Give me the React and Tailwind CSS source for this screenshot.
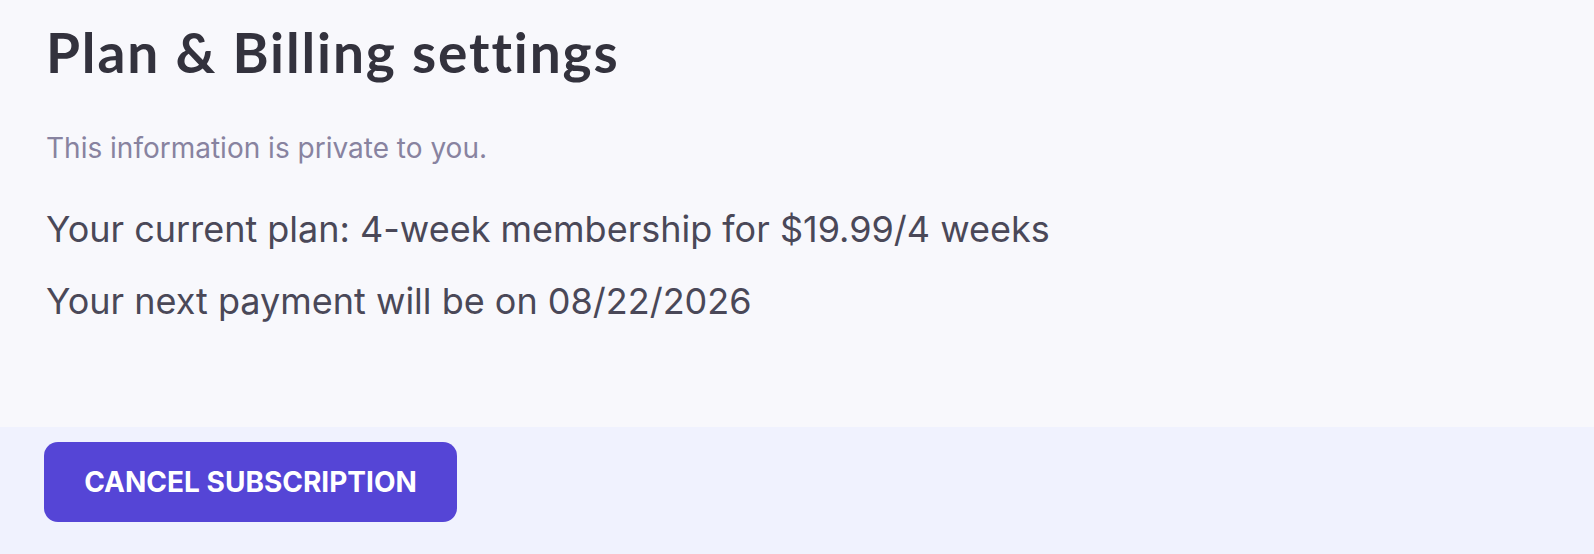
import React from 'react';

const App = () => {
  return (
    <div className="w-full h-[554px] flex flex-col bg-[#f8f8fc]" style={{ fontFamily: 'Inter, "Noto Sans", sans-serif' }}>
      <div className="flex-1 px-[46px] pt-[20px]">
        <h1
          className="text-[55px] leading-[64px] font-bold text-[#33323d] tracking-[1.9px]"
          style={{ fontFamily: 'Lato, "Open Sans", sans-serif' }}
        >
          Plan &amp; Billing settings
        </h1>
        <p className="mt-[47px] text-[28px] leading-[34px] text-[#8883a0]">
          This information is private to you.
        </p>
        <p className="mt-[42px] text-[36px] leading-[44px] text-[#4a4858]">
          Your current plan: 4-week membership for $19.99/4 weeks
        </p>
        <p className="mt-[28px] text-[36px] leading-[44px] text-[#4a4858]">
          Your next payment will be on 08/22/2026
        </p>
      </div>
      <div className="h-[127px] bg-[#f0f2fe] px-[44px] pt-[15px]">
        <button className="w-[413px] h-[80px] rounded-[14px] bg-[#5545d6] text-white text-[28px] font-bold uppercase">
          Cancel Subscription
        </button>
      </div>
    </div>
  );
};

export default App;
